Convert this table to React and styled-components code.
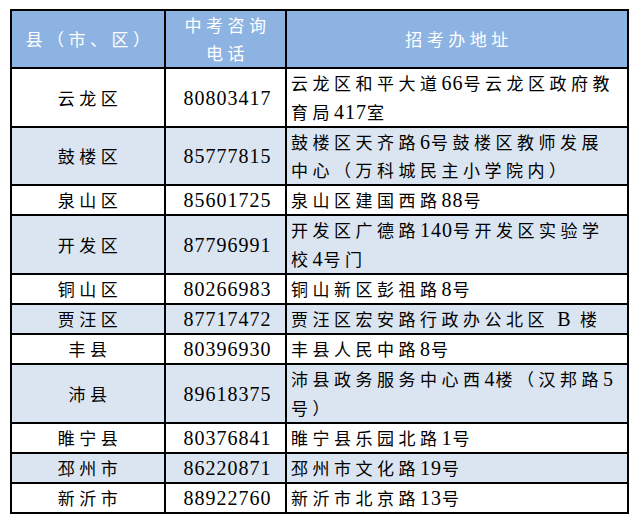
import React from "react";
import styled, { createGlobalStyle } from "styled-components";

const GlobalStyle = createGlobalStyle`
  html, body {
    margin: 0;
    padding: 0;
    background: #fff;
  }
  body {
    font-family: "Noto Sans CJK SC", sans-serif;
    color: #000;
  }
`;

const Page = styled.div`
  padding: 9px 11px 0 10px;
`;

const Table = styled.table`
  width: 619px;
  border-collapse: collapse;
  border: 2px solid #000;
  table-layout: fixed;
`;

const HeadCell = styled.th`
  background: #8db3e2;
  color: #fff;
  font-weight: normal;
  font-size: 17px;
  letter-spacing: 4.5px;
  line-height: 28.2px;
  padding: 0 0 0 4px;
  border: 2px solid #000;
  text-align: center;
  vertical-align: middle;
  white-space: nowrap;
`;

const Row = styled.tr`
  background: ${(p) => (p.$shaded ? "#dbe5f1" : "#fff")};
`;

const Cell = styled.td`
  font-size: 17px;
  letter-spacing: 4.5px;
  line-height: 28.2px;
  padding: ${(p) => (p.$align === "left" ? "0 7px 0 4px" : "0 0 0 4px")};
  border: 2px solid #000;
  text-align: ${(p) => p.$align || "center"};
  vertical-align: middle;
  word-break: break-all;
`;

const Num = styled.span`
  font-family: "Liberation Serif", serif;
  font-size: 20px;
  letter-spacing: 1px;
  line-height: 1;
`;

const rows = [
  ["云龙区", "80803417", "云龙区和平大道66号云龙区政府教育局417室"],
  ["鼓楼区", "85777815", "鼓楼区天齐路6号鼓楼区教师发展中心（万科城民主小学院内）"],
  ["泉山区", "85601725", "泉山区建国西路88号"],
  ["开发区", "87796991", "开发区广德路140号开发区实验学校4号门"],
  ["铜山区", "80266983", "铜山新区彭祖路8号"],
  ["贾汪区", "87717472", "贾汪区宏安路行政办公北区 B 楼"],
  ["丰县", "80396930", "丰县人民中路8号"],
  ["沛县", "89618375", "沛县政务服务中心西4楼（汉邦路5号）"],
  ["睢宁县", "80376841", "睢宁县乐园北路1号"],
  ["邳州市", "86220871", "邳州市文化路19号"],
  ["新沂市", "88922760", "新沂市北京路13号"],
];

// digits and latin letters are set in a serif face, the rest in the CJK face
const renderText = (text) =>
  text
    .split(/([0-9A-Za-z]+)/)
    .filter(Boolean)
    .map((part, i) =>
      /^[0-9A-Za-z]+$/.test(part) ? <Num key={i}>{part}</Num> : part
    );

export default function App() {
  return (
    <Page>
      <GlobalStyle />
      <Table>
        <colgroup>
          <col style={{ width: 154 }} />
          <col style={{ width: 121 }} />
          <col />
        </colgroup>
        <thead>
          <tr>
            <HeadCell>县（市、区）</HeadCell>
            <HeadCell>
              中考咨询
              <br />
              电话
            </HeadCell>
            <HeadCell>招考办地址</HeadCell>
          </tr>
        </thead>
        <tbody>
          {rows.map(([area, phone, address], i) => (
            <Row key={area} $shaded={i % 2 === 1}>
              <Cell>{area}</Cell>
              <Cell>{renderText(phone)}</Cell>
              <Cell $align="left">{renderText(address)}</Cell>
            </Row>
          ))}
        </tbody>
      </Table>
    </Page>
  );
}
